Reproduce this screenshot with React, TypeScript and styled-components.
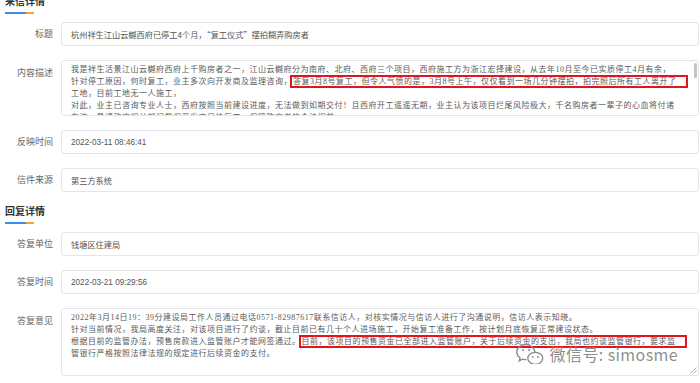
import { createGlobalStyle, styled } from "styled-components";

const GlobalStyle = createGlobalStyle`
  html, body {
    margin: 0;
    padding: 0;
    background: #fff;
    overflow: hidden;
  }
  body {
    font-family: "Noto Sans CJK SC", "Noto Sans", sans-serif;
  }
`;

const contentLines = [
  { text: "我是祥生活景江山云樾府西府上千购房者之一，江山云樾府分为南府、北府、西府三个项目，西府施工方为浙江宏择建设，从去年10月至今已实质停工4月有余，" },
  {
    text: "针对停工原因，何时复工，业主多次向开发商及监理咨询，",
    mark: "答复3月8号复工，但令人气愤的是，3月8号上午，仅仅看到一场几分钟摆拍，拍完照后所有工人离开了",
  },
  { text: "工地，目前工地无一人施工，" },
  { text: "对此，业主已咨询专业人士，西府按照当前建设进度，无法做到如期交付！且西府开工遥遥无期，业主认为该项目烂尾风险极大，千名购房者一辈子的心血将付诸" },
  { text: "东流，恳请政府相关部门督促开发商尽快复工，保障购房者的合法权益。" },
];

const replyLines = [
  { text: "2022年3月14日19：39分建设局工作人员通过电话0571-82987617联系信访人，对核实情况与信访人进行了沟通说明，信访人表示知晓。" },
  { text: "针对当前情况，我局高度关注，对该项目进行了约谈，截止目前已有几十个人进场施工，开始复工准备工作，按计划月底恢复正常建设状态。" },
  {
    text: "根据目前的监管办法，预售房款进入监管账户才能网签通过。",
    mark: "目前，该项目的预售资金已全部进入监管账户，关于后续资金的支出，我局也约谈监管银行，要求监",
  },
  { text: "管银行严格按照法律法规的规定进行后续资金的支付。" },
];

type TextLine = { text: string; mark?: string };

const WeChatIcon = () => (
  <svg width="29" height="21" viewBox="0 0 29 21" fill="none">
    <path
      d="M11 1.5c-5.2 0-9.3 3.4-9.3 7.6 0 2.4 1.3 4.5 3.4 5.9l-.9 2.8 3.2-1.7c1.1.4 2.3.6 3.6.6"
      stroke="#8a8a8a"
      strokeWidth="1.3"
      strokeLinecap="round"
    />
    <path
      d="M20.3 9.3c-4.2 0-7.5 2.7-7.5 6 0 3.3 3.3 6 7.5 6 .9 0 1.8-.1 2.6-.4l2.5 1.3-.7-2.2c1.8-1.1 3-2.8 3-4.7 0-3.3-3.3-6-7.4-6z"
      stroke="#8a8a8a"
      strokeWidth="1.3"
      strokeLinejoin="round"
    />
    <path d="M20.3 9.3c-1.2-4.4-5-7.6-9.3-7.8" stroke="#8a8a8a" strokeWidth="1.3" strokeLinecap="round" />
    <circle cx="8" cy="7" r="1" fill="#8a8a8a" />
    <circle cx="14" cy="7" r="1" fill="#8a8a8a" />
    <circle cx="17.8" cy="14" r="0.9" fill="#8a8a8a" />
    <circle cx="22.8" cy="14" r="0.9" fill="#8a8a8a" />
  </svg>
);

const ResizeGrip = () => (
  <Grip width="7" height="7" viewBox="0 0 7 7">
    <path d="M6.5 0.5L0.5 6.5M6.5 3.5L3.5 6.5" stroke="#9a9a9a" strokeWidth="0.8" />
  </Grip>
);

const renderLines = (lines: TextLine[]) =>
  lines.map((line, i) => (
    <Line key={i}>
      {line.text}
      {line.mark && <Mark>{line.mark}</Mark>}
    </Line>
  ));

const App = () => {
  return (
    <>
      <GlobalStyle />
      <Page>
        <Section>
          <SectionTitle>来信详情</SectionTitle>
          <TitleBar />
          <Rows>
            <Row>
              <Label>标题</Label>
              <Field $cjk>杭州祥生江山云樾西府已停工4个月，“复工仪式”摆拍糊弄购房者</Field>
            </Row>
            <Row>
              <Label $multi>内容描述</Label>
              <TextBox $height={56}>
                {renderLines(contentLines)}
                <ScrollThumb />
              </TextBox>
            </Row>
            <Row>
              <Label>反映时间</Label>
              <Field>2022-03-11 08:46:41</Field>
            </Row>
            <Row>
              <Label>信件来源</Label>
              <Field $cjk>第三方系统</Field>
            </Row>
          </Rows>
        </Section>
        <Section $spaced>
          <SectionTitle>回复详情</SectionTitle>
          <TitleBar />
          <Rows>
            <Row>
              <Label>答复单位</Label>
              <Field $cjk>钱塘区住建局</Field>
            </Row>
            <Row>
              <Label>答复时间</Label>
              <Field>2022-03-21 09:29:56</Field>
            </Row>
            <Row>
              <Label $multi>答复意见</Label>
              <TextBox $height={68}>
                {renderLines(replyLines)}
                <Watermark>
                  <WeChatIcon />
                  <span>微信号: simosme</span>
                </Watermark>
                <ResizeGrip />
              </TextBox>
            </Row>
          </Rows>
        </Section>
      </Page>
    </>
  );
};

export default App;

const Page = styled.div`
  margin-top: -6px;
  padding: 0 1px 0 5px;
`;

const Section = styled.section<{ $spaced?: boolean }>`
  display: flex;
  flex-direction: column;
  margin-top: ${(p) => (p.$spaced ? "12px" : "0")};
`;

const SectionTitle = styled.h3`
  margin: 0;
  font-size: 10px;
  line-height: 14px;
  font-weight: 700;
  color: #303133;
`;

const TitleBar = styled.div`
  margin-top: 4px;
  width: 29px;
  height: 2px;
  background: linear-gradient(to right, #3a8cef 0 21px, #f1a43c 21px 29px);
`;

const Rows = styled.div`
  display: grid;
  row-gap: 14px;
  margin-top: 8px;
`;

const Row = styled.div`
  display: grid;
  grid-template-columns: 48px 1fr;
  column-gap: 8px;
  align-items: start;
`;

const Label = styled.div<{ $multi?: boolean }>`
  text-align: right;
  font-size: 9px;
  line-height: 24px;
  padding-top: ${(p) => (p.$multi ? "1px" : "0")};
  color: #666;
  white-space: nowrap;
`;

const Field = styled.div<{ $cjk?: boolean }>`
  box-sizing: border-box;
  height: 24px;
  display: flex;
  align-items: center;
  padding: 0 9px;
  border: 1px solid #e3e5ea;
  border-radius: 3px;
  background: #fff;
  font-family: ${(p) =>
    p.$cjk ? `"Noto Sans CJK SC", sans-serif` : `"Liberation Sans", "Noto Sans CJK SC", sans-serif`};
  font-size: 8.2px;
  color: #555;
  white-space: nowrap;
`;

const TextBox = styled.div<{ $height: number }>`
  position: relative;
  box-sizing: border-box;
  height: ${(p) => p.$height}px;
  overflow: hidden;
  padding: 3px 9px;
  border: 1px solid #e3e5ea;
  border-radius: 3px;
  background: #fff;
  font-family: "Liberation Serif", "Noto Sans CJK SC", sans-serif;
  font-size: 8px;
  letter-spacing: 0.5px;
  line-height: 12px;
  color: #5a5a5a;
`;

const Line = styled.div`
  white-space: nowrap;
`;

const Mark = styled.span`
  outline: 2px solid #e5141c;
  padding: 0 9px 0 1px;
`;

const ScrollThumb = styled.div`
  position: absolute;
  top: 2px;
  right: 1px;
  width: 3px;
  height: 15px;
  border-radius: 2px;
  background: #c4c4c4;
`;

const Watermark = styled.div`
  position: absolute;
  right: 20px;
  top: 34px;
  display: flex;
  align-items: center;
  gap: 6px;
  font-family: "Noto Sans CJK SC", sans-serif;
  font-size: 16px;
  line-height: 20px;
  letter-spacing: 0.4px;
  color: rgba(120, 120, 120, 0.85);
  text-shadow: 0 0 2px #fff;
  white-space: nowrap;
`;

const Grip = styled.svg`
  position: absolute;
  right: 1px;
  bottom: 1px;
`;
